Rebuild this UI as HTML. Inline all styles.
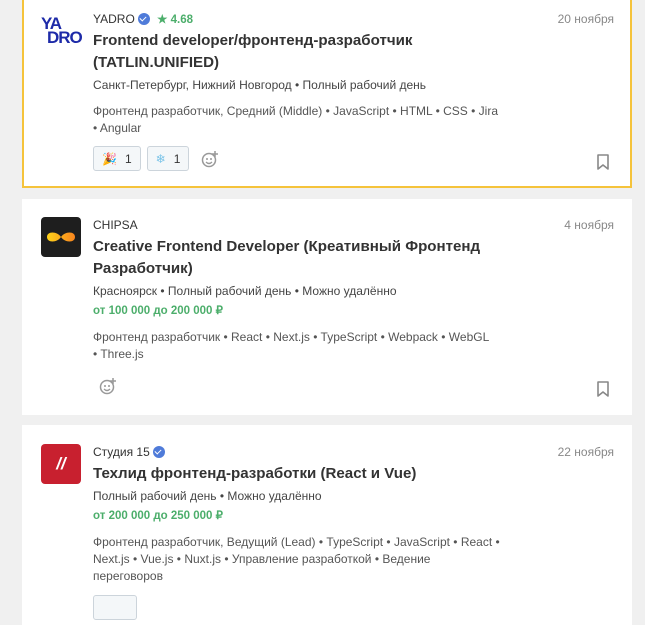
<!DOCTYPE html>
<html><head><meta charset="utf-8"><style>
body{margin:0;background:#f0f0f0;font-family:"Liberation Sans",sans-serif;color:#333;width:645px;height:601px;overflow:hidden;position:relative}
.card{position:absolute;left:22px;width:610px;background:#fff;box-sizing:border-box}
.c1{top:-4px;height:192px;border:2px solid #f5c33b;border-top:none}
.logo{position:absolute;left:19px;width:40px;height:40px;border-radius:4px}
.body{position:absolute;left:71px;right:18px}
.comp{font-size:12px;color:#333;height:18px;line-height:18px}
.date{position:absolute;right:0;top:0;font-size:12px;color:#888;line-height:18px}
.title{font-size:15.1px;font-weight:bold;line-height:22px;color:#333;margin-top:2px}
.meta{font-size:12px;line-height:18px;color:#444;margin-top:2px}
.sal{font-size:11.5px;font-weight:bold;color:#4cae6b;line-height:18px;margin-top:2px}
.tags{font-size:12px;line-height:17px;color:#555;margin-top:9px}
.chk{display:inline-block;width:12px;height:12px;border-radius:50%;background:#4f7bd9;vertical-align:-2px;margin-left:3px;position:relative}
.chk:after{content:"";position:absolute;left:3.5px;top:2px;width:3px;height:5px;border:solid #fff;border-width:0 1.5px 1.5px 0;transform:rotate(45deg)}
.react{position:absolute;left:69px;display:flex;gap:6px;align-items:center}
.pill{border:1px solid #ccd4db;border-radius:3px;background:#f4f7f9;height:25px;padding:0 8px;font-size:12px;display:flex;align-items:center;gap:8px;box-sizing:border-box}
.bm{position:absolute;right:22px}
</style></head><body>

<div class="card c1">
 <div class="logo" style="left:17px;top:19px;color:#1d2aa8;font-weight:900;font-size:17px;line-height:14px;letter-spacing:-1px"><div style="padding-top:2px">YA</div><div style="padding-left:6px">DRO</div></div>
 <div class="body" style="top:14px;left:69px;right:16px">
  <div class="comp">YADRO<span class="chk"></span> <span style="color:#4cae6b;font-size:11.5px;font-weight:bold;margin-left:4px">★ 4.68</span></div>
  <div class="date">20 ноября</div>
  <div class="title">Frontend developer/фронтенд-разработчик<br>(TATLIN.UNIFIED)</div>
  <div class="meta">Санкт-Петербург, Нижний Новгород • Полный рабочий день</div>
  <div class="tags">Фронтенд разработчик, Средний (Middle) • JavaScript • HTML • CSS • Jira<br>• Angular</div>
 </div>
 <div class="react" style="top:150px"><div class="pill"><span style="color:#d33">🎉</span>1</div><div class="pill"><span style="color:#7bc4e8">❄</span>1</div>
 <svg width="18" height="18" viewBox="0 0 18 18" style="margin-left:6px"><circle cx="8" cy="10" r="6.5" fill="none" stroke="#999" stroke-width="1.5"/><circle cx="6" cy="9" r="1" fill="#999"/><circle cx="10" cy="9" r="1" fill="#999"/><path d="M5 12q3 3 6 0" fill="none" stroke="#999" stroke-width="1.3"/><path d="M14 1v6M11 4h6" stroke="#999" stroke-width="1.5"/></svg></div>
 <svg class="bm" style="top:158px;right:20px" width="14" height="16" viewBox="0 0 14 16"><path d="M2 1h10v14l-5-4-5 4z" fill="none" stroke="#888" stroke-width="1.6" stroke-linejoin="round"/></svg>
</div>

<div class="card" style="top:199px;height:216px">
 <div class="logo" style="top:18px;background:#1e1e1e"><svg width="40" height="40" viewBox="0 0 40 40"><defs><linearGradient id="g" x1="0" x2="1"><stop offset="0" stop-color="#ffd21a"/><stop offset="1" stop-color="#f7841e"/></linearGradient></defs><path d="M6 20c0-6 10-6 14 0s14 6 14 0-10-6-14 0-14 6-14 0z" fill="url(#g)"/></svg></div>
 <div class="body" style="top:17px">
  <div class="comp">CHIPSA</div>
  <div class="date">4 ноября</div>
  <div class="title">Creative Frontend Developer (Креативный Фронтенд<br>Разработчик)</div>
  <div class="meta">Красноярск • Полный рабочий день • Можно удалённо</div>
  <div class="sal">от 100 000 до 200 000 ₽</div>
  <div class="tags">Фронтенд разработчик • React • Next.js • TypeScript • Webpack • WebGL<br>• Three.js</div>
 </div>
 <svg style="position:absolute;left:77px;top:178px" width="18" height="18" viewBox="0 0 18 18"><circle cx="8" cy="10" r="6.5" fill="none" stroke="#999" stroke-width="1.5"/><circle cx="6" cy="9" r="1" fill="#999"/><circle cx="10" cy="9" r="1" fill="#999"/><path d="M5 12q3 3 6 0" fill="none" stroke="#999" stroke-width="1.3"/><path d="M14 1v6M11 4h6" stroke="#999" stroke-width="1.5"/></svg>
 <svg class="bm" style="top:182px" width="14" height="16" viewBox="0 0 14 16"><path d="M2 1h10v14l-5-4-5 4z" fill="none" stroke="#888" stroke-width="1.6" stroke-linejoin="round"/></svg>
</div>

<div class="card" style="top:425px;height:200px">
 <div class="logo" style="top:19px;background:#c8202f;color:#fff;font-weight:900;font-style:italic;font-size:17px;text-align:center;line-height:40px">//</div>
 <div class="body" style="top:18px">
  <div class="comp">Студия 15<span class="chk"></span></div>
  <div class="date">22 ноября</div>
  <div class="title">Техлид фронтенд-разработки (React и Vue)</div>
  <div class="meta">Полный рабочий день • Можно удалённо</div>
  <div class="sal">от 200 000 до 250 000 ₽</div>
  <div class="tags">Фронтенд разработчик, Ведущий (Lead) • TypeScript • JavaScript • React •<br>Next.js • Vue.js • Nuxt.js • Управление разработкой • Ведение<br>переговоров</div>
 </div>
 <div class="pill" style="position:absolute;left:71px;top:170px;width:44px"></div>
</div>
</body></html>
